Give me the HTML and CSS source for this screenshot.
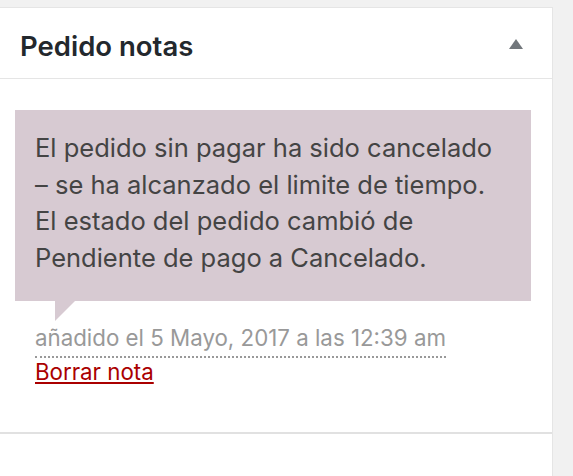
FILE: index.html
```html
<!DOCTYPE html>
<html>
  <head>
    <title>Pedido notas</title>
    <link rel="stylesheet" href="styles.css">
  </head>
  <body>
    <div class="postbox">
      <div class="postbox-header">
        <h2 class="postbox-title">Pedido notas</h2>
        <span class="toggle-indicator"></span>
      </div>
      <div class="inside">
        <ul class="order-notes">
          <li class="note system-note">
            <div class="note-content">
              <p>El pedido sin pagar ha sido cancelado –&nbsp;se ha alcanzado el limite de tiempo. El estado del pedido cambió de Pendiente de pago a Cancelado.</p>
            </div>
            <p class="meta">
              <abbr class="exact-date" title="2017-05-05 00:39:00">añadido el 5 Mayo, 2017 a las 12:39 am</abbr>
              <a href="#" class="delete-note">Borrar nota</a>
            </p>
          </li>
        </ul>
      </div>
      <div class="add-note"></div>
    </div>
  </body>
</html>
```

FILE: styles.css
```css
body {
  margin: 0;
  background-color: #f1f1f1;
  font-family: Inter, Roboto, sans-serif;
  color: #23282d;
}
.postbox {
  margin-top: 7px;
  width: 553px;
  height: 469px;
  background-color: white;
  border-top: 1px solid #e5e5e5;
  border-right: 1px solid #e5e5e5;
  box-sizing: border-box;
}
.postbox-header {
  display: flex;
  align-items: center;
  justify-content: space-between;
  height: 71px;
  padding: 6px 29px 0 20px;
  box-sizing: border-box;
  border-bottom: 1px solid #e5e5e5;
}
.postbox-title {
  margin: 0;
  font-size: 27.5px;
  font-weight: 600;
}
.toggle-indicator {
  width: 0;
  height: 0;
  border-left: 7px solid transparent;
  border-right: 7px solid transparent;
  border-bottom: 10px solid #72777c;
  margin-top: -4px;
}
.inside {
  padding: 31px 21px 0 15px;
  height: 322px;
  border-bottom: 2px solid #e1e1e1;
}
.order-notes {
  list-style: none;
  margin: 0;
  padding: 0;
}
.note-content {
  position: relative;
  background-color: #d7cad2;
  padding: 20px 20px 25px 20px;
  color: #444;
}
.note-content p {
  margin: 0;
  font-size: 25.5px;
  line-height: 36.5px;
}
.note-content::after {
  content: "";
  position: absolute;
  left: 40px;
  bottom: -20px;
  width: 0;
  height: 0;
  border-top: 20px solid #d7cad2;
  border-right: 20px solid transparent;
}
.meta {
  display: flex;
  flex-direction: column;
  align-items: flex-start;
  margin: 0;
  padding: 23px 0 0 20px;
  font-size: 22.3px;
}
.exact-date {
  color: #999;
  text-decoration: none;
  border-bottom: 2px dotted #999;
  line-height: 28px;
  padding-bottom: 4px;
}
.delete-note {
  color: #aa0000;
  line-height: 28px;
  text-decoration: underline;
}
```
